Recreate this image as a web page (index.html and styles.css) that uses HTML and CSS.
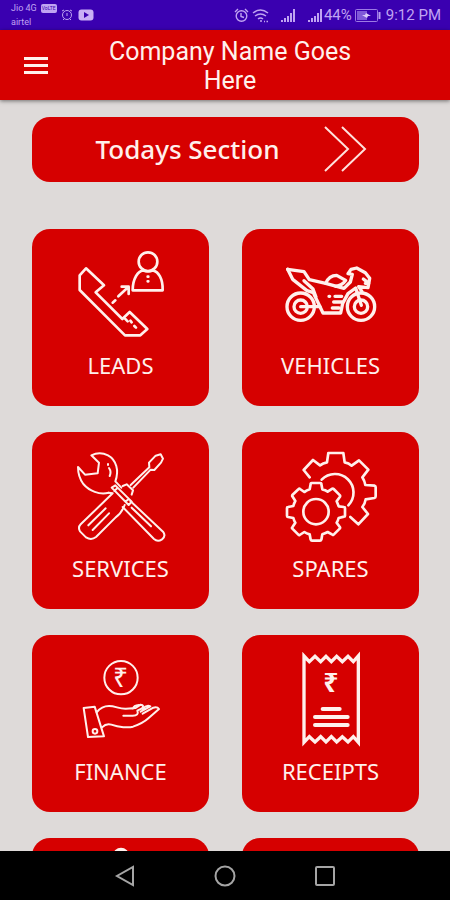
FILE: index.html
```
<!DOCTYPE html>
<html lang="en">
<head>
    <meta charset="UTF-8">
    <meta name="viewport" content="width=device-width, initial-scale=1.0">
    <title>Company Name Goes Here</title>
    <link rel="stylesheet" href="styles.css">
</head>
<body>
    <!-- Status bar -->
    <div class="status-bar">
        <div class="carriers">
            <span class="carrier">Jio 4G <span class="volte">VoLTE</span></span>
            <span class="carrier">airtel</span>
        </div>
        <div class="status-left">
            <svg width="12" height="12" viewBox="0 0 12 12" fill="none" stroke="currentColor"><circle cx="6" cy="6" r="4.5"/><path d="M6 4v3M1 2l2-1M11 2L9 1M2 11l1-1M10 11l-1-1"/></svg>
            <svg width="16" height="12" viewBox="0 0 16 12"><rect x="0.5" y="0.5" width="15" height="11" rx="3" fill="#c9b0f5"/><path d="M6 3l5 3-5 3z" fill="#3a00b0"/></svg>
        </div>
        <div class="status-right">
            <svg width="15" height="15" viewBox="0 0 15 15" fill="none" stroke="currentColor" stroke-width="1.4"><circle cx="7.5" cy="8" r="5.3"/><path d="M7 5v3.500l3 1M1 4l3-3M14 4l-3-3"/></svg>
            <svg width="17" height="15" viewBox="0 0 17 15" fill="none" stroke="currentColor" stroke-width="1.500"><path d="M1 5q7.500-6 15 0M3 8q5.500-4 11 0M6 11q2.500-2 5 0"/><path d="M8 13h2M12 13.500h1M14.500 13.500h1.500"/></svg>
            <svg class="signal" width="16" height="15" viewBox="0 0 16 15" fill="none" stroke="currentColor" stroke-width="2"><path d="M2 14v-2M5 14v-4M8 14V8M11 14V5M14 14V1"/></svg>
            <svg class="signal" width="16" height="15" viewBox="0 0 16 15" fill="none" stroke="currentColor" stroke-width="2"><path d="M2 14v-2M5 14v-4M8 14V8M11 14V5M14 14V1"/></svg>
            <span>44%</span>
            <svg class="battery" width="26" height="13" viewBox="0 0 26 13"><rect x="0.500" y="0.500" width="22" height="12" rx="1" fill="none" stroke="#9c7be4"/><rect x="2" y="2" width="10" height="9" fill="#8059d8"/><path d="M24.500 3v7" stroke="#b99cf0" stroke-width="2"/><path d="M7 6h3l1-2 5 3h-3l-1 2z" fill="#dccbfa"/></svg>
            <span>9:12 PM</span>
        </div>
    </div>

    <!-- App header -->
    <header class="app-header">
        <button class="menu-button" aria-label="Menu">
            <span></span>
            <span></span>
            <span></span>
        </button>
        <h1>Company Name Goes Here</h1>
    </header>

    <main class="content">
        <button class="today-button">
            <span>Todays Section</span>
            <svg width="44" height="48" viewBox="0 0 44 48" fill="none" stroke="#ffe1dc" stroke-width="2"><path d="M2 2l23 22L2 46M19 2l23 22-23 22"/></svg>
        </button>

        <div class="tile-grid">
            <button class="tile">
                <svg viewBox="136 66 300 300">
                    <path d="M162 160L181 139L235 190L210 211L290 291L312 270L365 321L344 340H298L162 204Z"/>
                    <path d="M298 290l8 8M314 296l4 5M326 312l5 5"/>
                    <path d="M261 242l8-7M278 223L308 195M288 194H309V216"/>
                    <circle cx="367" cy="119" r="28"/>
                    <path d="M321 205C321 168 338 147 352 145Q367 152 382 145C398 149 412 170 411 205Z"/>
                    <path d="M366 164h2M366 178h2"/>
                </svg>
                <span>LEADS</span>
            </button>

            <button class="tile">
                <svg class="heavy" viewBox="136 66 300 300">
                    <circle cx="195" cy="254" r="41"/>
                    <circle cx="195" cy="254" r="20"/>
                    <circle cx="376" cy="254" r="41"/>
                    <circle cx="376" cy="254" r="20"/>
                    <path d="M195 254H253L262 273H315L321 244L337 215L360 198L377 250"/>
                    <path d="M156 142L205 149L221 173L270 184L325 199L344 180L350 157L337 155L346 142L363 138L389 152L402 169L397 197L369 194L379 209"/>
                    <path d="M156 142L171 172L214 206L233 212L253 254M205 176L232 201L241 225"/>
                    <path d="M270 184Q280 160 303 160L330 175Q320 190 300 193"/>
                    <path d="M383 171L397 182M389 184h10M280 223h2M298 223H318M294 240H320M290 258H310"/>
                </svg>
                <span>VEHICLES</span>
            </button>

            <button class="tile">
                <svg class="thin" viewBox="136 66 300 300">
                    <path d="M220 113L197 91Q222 79 247 91C272 105 281 136 269 169L287 188M249 203C222 211 190 197 173 177Q157 155 157 126L178 149L216 145L220 113"/>
                    <path d="M247 117v3M250 129Q258 140 252 153"/>
                    <path d="M258 188L269 181L318 230L309 240ZM266 198L274 190M299 230L310 222"/>
                    <path d="M314 228L412 320Q422 333 409 343Q396 352 385 342L291 246M318 248L376 304"/>
                    <path d="M315 180L371 127L370 113L390 92L405 88L412 101L406 113L386 135L375 134L323 188"/>
                    <path d="M291 183L303 178L322 196L318 209"/>
                    <path d="M249 203L261 205L165 298Q156 307 163 319L181 337Q197 347 211 336L270 277Q287 266 297 240"/>
                    <path d="M240 250L188 301M250 265L201 315"/>
                </svg>
                <span>SERVICES</span>
            </button>

            <button class="tile">
                <svg viewBox="136 66 300 300">
                    <path d="M222 157L204 135L232 105L253 121Q262 114 274 112L278 84H323L327 112Q339 114 348 122L370 106L398 134L380 157Q387 168 389 180L417 182Q420 183 420 187V214Q420 218 416 219L390 223Q388 236 380 246L397 267L368 298L344 276"/>
                    <path d="M258 164A54 54 0 0 1 338 241"/>
                    <circle cx="241" cy="260" r="38"/>
                    <path d="M225 177Q225 174 228 174H254Q257 174 257 177L260 193Q269 195 276 200L290 191Q292 190 294 192L313 211Q314 213 313 215L303 229Q306 236 309 244L325 246Q328 246 328 249V272Q328 275 325 275L309 279Q307 287 303 293L313 307Q314 309 312 311L294 329Q292 331 290 329L276 321Q268 325 260 328L257 344Q256 347 253 347H229Q226 347 225 344L222 328Q213 326 206 321L192 330Q190 331 188 329L170 311Q168 309 170 307L179 293Q175 287 173 279L157 276Q154 275 154 272V249Q154 246 157 246L173 243Q175 235 179 228L170 214Q169 212 170 210L189 192Q191 190 193 192L206 201Q214 196 222 193Z"/>
                </svg>
                <span>SPARES</span>
            </button>

            <button class="tile">
                <svg class="thin" viewBox="136 66 300 300">
                    <circle cx="286" cy="149" r="50"/>
                    <text class="rupee" x="285" y="176">₹</text>
                    <path d="M174 240L207 236L235 325L187 327Z"/>
                    <circle cx="208" cy="310" r="7"/>
                    <path d="M213 253Q228 234 250 234C270 234 280 243 301 242L330 240L345 230Q357 231 349 241L335 248Q341 263 321 263H293M229 298Q242 285 257 290C280 298 308 300 322 296Q353 285 369 270L400 243Q395 236 383 239L351 257M345 251L374 235Q363 229 350 243M322 242Q324 232 340 231"/>
                </svg>
                <span>FINANCE</span>
            </button>

            <button class="tile">
                <svg class="heavy" viewBox="136 66 300 300">
                    <path class="sharp" d="M205 84V343L221 326L238 342L255 326L271 342L287 326L303 342L320 326L337 342L353 326L368 343V84L353 101L337 85L320 101L303 85L287 101L271 85L255 101L238 85L221 101Z"/>
                    <text class="rupee bold" x="286" y="192">₹</text>
                    <path class="thick" d="M261 243H312M238 267H336M238 291H336"/>
                </svg>
                <span>RECEIPTS</span>
            </button>

            <button class="tile" aria-label="More">
                <svg viewBox="136 66 300 300">
                    <circle class="dot" cx="286" cy="74" r="24"/>
                </svg>
            </button>

            <button class="tile" aria-label="More"></button>
        </div>
    </main>

    <!-- System navigation -->
    <nav class="nav-bar">
        <button aria-label="Back"><svg width="22" height="22" viewBox="0 0 22 22"><path d="M19 2v18L3 11z"/></svg></button>
        <button aria-label="Home"><svg width="22" height="22" viewBox="0 0 22 22"><circle cx="11" cy="11" r="9.500"/></svg></button>
        <button aria-label="Recent apps"><svg width="22" height="22" viewBox="0 0 22 22"><rect x="2" y="2" width="18" height="18" rx="1"/></svg></button>
    </nav>
</body>
</html>
```

FILE: styles.css
```
* {
    box-sizing: border-box;
}
body {
    margin: 0;
    height: 100vh;
    display: flex;
    flex-direction: column;
    background: #dedad9;
    font-family: "Noto Sans", "Open Sans", sans-serif;
    color: #fff0ec;
}
button {
    padding: 0;
    border: none;
    background: none;
    color: inherit;
    font-family: inherit;
    cursor: pointer;
}
.status-bar {
    flex: none;
    height: 30px;
    padding: 0 9px 0 11px;
    display: flex;
    align-items: center;
    background: #3a00b0;
    color: #c0a4f2;
    font-family: Roboto, sans-serif;
    font-size: 15px;
}
.carriers {
    display: flex;
    flex-direction: column;
    font-size: 9px;
    line-height: 14px;
}
.carrier {
    display: flex;
    align-items: center;
    gap: 4px;
}
.volte {
    padding: 0 1px;
    border-radius: 2px;
    background: #c0a4f2;
    color: #3a00b0;
    font-size: 5px;
    line-height: 9px;
}
.status-left {
    display: flex;
    gap: 5px;
    margin-left: 4px;
}
.status-right {
    display: flex;
    align-items: center;
    gap: 3px;
    margin-left: auto;
}
.signal {
    margin-left: 8px;
}
.signal + span {
    margin-left: -2px;
}
.battery {
    margin-right: 2px;
}
.app-header {
    flex: none;
    height: 70px;
    display: grid;
    grid-template-columns: 85px 1fr 75px;
    align-items: center;
    background: #d60000;
    box-shadow: 0 1px 4px rgba(0, 0, 0, 0.5);
    z-index: 1;
}
.app-header h1 {
    margin: 0;
    padding-top: 2px;
    font-family: Roboto, sans-serif;
    font-size: 25px;
    font-weight: 400;
    line-height: 29px;
    text-align: center;
}
.menu-button {
    width: 24px;
    margin-left: 24px;
    display: flex;
    flex-direction: column;
    gap: 4px;
}
.menu-button span {
    width: 100%;
    height: 3px;
    background: #fff0ec;
}
.content {
    flex: 1;
    min-height: 0;
    overflow: hidden;
    padding: 17px 31px 0 32px;
}
.today-button {
    width: 100%;
    height: 65px;
    margin-bottom: 47px;
    padding: 0 0 2px 12px;
    display: flex;
    align-items: center;
    justify-content: center;
    gap: 44px;
    border-radius: 18px;
    background: #d60000;
    font-size: 26px;
    font-weight: 500;
}
.tile-grid {
    display: grid;
    grid-template-columns: 1fr 1fr;
    gap: 26px 33px;
}
.tile {
    aspect-ratio: 1;
    padding-top: 15px;
    display: flex;
    flex-direction: column;
    align-items: center;
    gap: 7px;
    border-radius: 18px;
    background: #d60000;
    font-size: 22px;
    line-height: 28px;
}
.tile svg {
    width: 100px;
    height: 100px;
    overflow: visible;
    fill: none;
    stroke: #fff0ec;
    stroke-width: 8px;
    stroke-linecap: round;
    stroke-linejoin: round;
}
.tile svg.thin {
    stroke-width: 6px;
}
.tile svg.heavy {
    stroke-width: 10px;
}
.tile .sharp {
    stroke-linejoin: miter;
}
.tile .thick {
    stroke-width: 12px;
}
.tile .dot {
    fill: #fff0ec;
    stroke: none;
}
.rupee {
    fill: #fff0ec;
    stroke: none;
    font-size: 80px;
    text-anchor: middle;
}
.rupee.bold {
    font-weight: 700;
}
.nav-bar {
    flex: none;
    height: 49px;
    display: flex;
    align-items: center;
    justify-content: center;
    gap: 78px;
    background: #000;
}
.nav-bar svg {
    display: block;
    fill: none;
    stroke: #a5a5a5;
    stroke-width: 2px;
}
```
